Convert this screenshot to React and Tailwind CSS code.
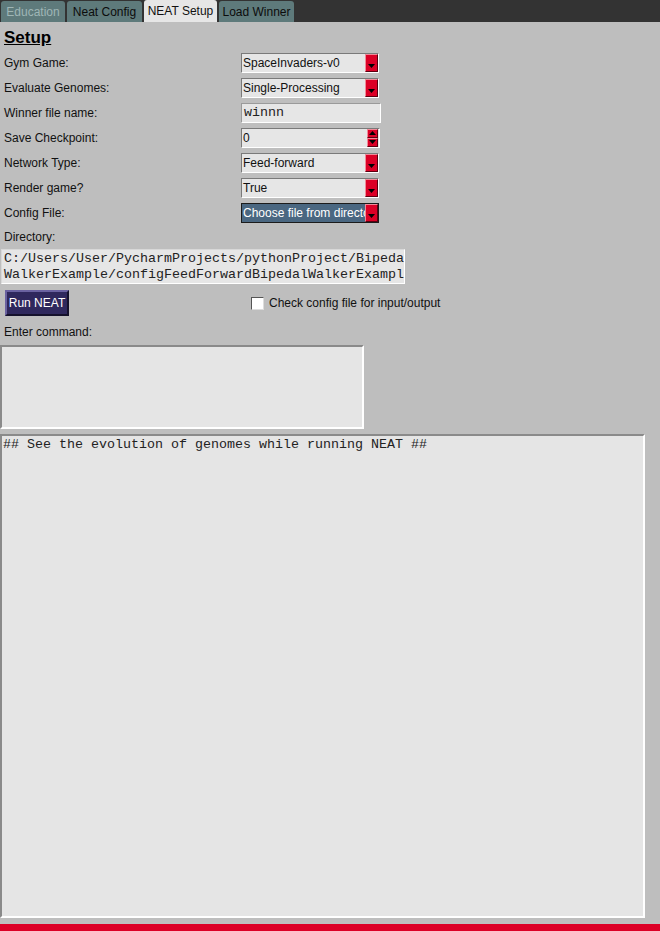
import React from 'react';

const ui = { fontFamily: '"Liberation Sans", Arial, sans-serif' };
const mono = { fontFamily: '"Liberation Mono", "Courier New", monospace' };

// small black triangle used on the red buttons
const Tri = ({ up }) => (
  <svg width="7" height="4" viewBox="0 0 7 4" className="block">
    <path d={up ? 'M0 4 L3.5 0 L7 4 Z' : 'M0 0 L7 0 L3.5 4 Z'} fill="#000" />
  </svg>
);

const RedButton = ({ children, className }) => (
  <div
    className={`flex justify-center bg-[#dc0026] border border-t-[#f08a98] border-l-[#f08a98] border-b-[#5a0010] border-r-[#5a0010] ${className}`}
  >
    {children}
  </div>
);

const Combo = ({ value, selected }) => (
  <div
    className={
      selected
        ? 'flex h-[20px] w-[138px] border border-[#1b1b1b] bg-[#4a6781]'
        : 'flex h-[20px] w-[138px] border border-t-[#7a7a7a] border-l-[#7a7a7a] border-b-white border-r-white bg-[#e6e6e6]'
    }
  >
    <span
      className={`flex-1 overflow-hidden whitespace-nowrap pl-[1px] text-[12px] leading-[18px] ${selected ? 'text-white' : 'text-[#111]'}`}
    >
      {value}
    </span>
    <RedButton className="w-[13px] items-end pb-[3px]">
      <Tri />
    </RedButton>
  </div>
);

const Spin = ({ value }) => (
  <div className="flex h-[20px] w-[139px] border border-t-[#7a7a7a] border-l-[#7a7a7a] border-b-white border-r-white bg-[#e6e6e6]">
    <span className="flex-1 pl-[1px] text-[12px] leading-[18px] text-[#111]">{value}</span>
    <div className="flex w-[11px] flex-col mr-[1px]">
      <RedButton className="h-[9px] items-center">
        <Tri up />
      </RedButton>
      <RedButton className="h-[9px] items-center">
        <Tri />
      </RedButton>
    </div>
  </div>
);

const Entry = ({ value }) => (
  <div className="h-[20px] w-[140px] border border-t-[#9a9a9a] border-l-[#9a9a9a] border-b-white border-r-white bg-[#e6e6e6] pl-[2px] text-[13.33px] leading-[18px] text-[#222]" style={mono}>
    {value}
  </div>
);

const Row = ({ label, children }) => (
  <div className="flex h-[25px] items-center pl-[4px]">
    <span className="w-[237px] text-[12px] text-[#111]">{label}</span>
    {children}
  </div>
);

const tabs = [
  { name: 'Education', w: 'w-[64px]', muted: true },
  { name: 'Neat Config', w: 'w-[75px]' },
  { name: 'NEAT Setup', w: 'w-[73px]', active: true },
  { name: 'Load Winner', w: 'w-[75px]' },
];

export default function App() {
  return (
    <div className="flex h-[931px] w-[660px] flex-col overflow-hidden bg-[#bebebe]" style={ui}>
      {/* tab strip */}
      <div className="flex h-[22px] items-end gap-[2px] bg-[#333333] pl-[1px]">
        {tabs.map((t) => (
          <div
            key={t.name}
            className={`flex h-[21px] ${t.w} items-center justify-center rounded-t-[3px] text-[12px] ${
              t.active
                ? 'h-[22px] bg-[#e6e6e6] text-[#111]'
                : t.muted
                ? 'bg-[#5e7a7b] text-[#9fb6b6]'
                : 'bg-[#5e7a7b] text-[#0c0c0c]'
            }`}
          >
            {t.name}
          </div>
        ))}
      </div>

      <div className="pl-[4px] pt-[4px] h-[28px]">
        <span className="text-[17px] font-bold underline leading-[22px] text-black">Setup</span>
      </div>

      <Row label="Gym Game:">
        <Combo value="SpaceInvaders-v0" />
      </Row>
      <Row label="Evaluate Genomes:">
        <Combo value="Single-Processing" />
      </Row>
      <Row label="Winner file name:">
        <Entry value="winnn" />
      </Row>
      <Row label="Save Checkpoint:">
        <Spin value="0" />
      </Row>
      <Row label="Network Type:">
        <Combo value="Feed-forward" />
      </Row>
      <Row label="Render game?">
        <Combo value="True" />
      </Row>
      <Row label="Config File:">
        <Combo value="Choose file from directory" selected />
      </Row>
      <div className="flex h-[24px] items-center pl-[4px] text-[12px] text-[#111]">Directory:</div>

      <div
        className="ml-[1px] h-[35px] w-[404px] border border-t-[#d8d8d8] border-l-[#d8d8d8] border-b-white border-r-white bg-[#e6e6e6] pl-[2px] pt-[1px] text-[13.33px] leading-[16px] text-[#222] overflow-hidden whitespace-nowrap"
        style={mono}
      >
        <div>C:/Users/User/PycharmProjects/pythonProject/Bipeda</div>
        <div>WalkerExample/configFeedForwardBipedalWalkerExampl</div>
      </div>

      <div className="flex items-center pt-[6px]">
        <button className="ml-[5px] h-[26px] w-[64px] border-2 border-t-[#6a62a0] border-l-[#6a62a0] border-b-[#15112c] border-r-[#15112c] bg-[#2f285d] text-[12px] text-white">
          Run NEAT
        </button>
        <div className="ml-[182px] flex items-center gap-[5px]">
          <span className="block h-[13px] w-[13px] border border-t-[#555] border-l-[#555] border-b-[#ddd] border-r-[#ddd] bg-white" />
          <span className="text-[12px] text-[#111]">Check config file for input/output</span>
        </div>
      </div>

      <div className="flex h-[29px] items-center pl-[4px] pt-[2px] text-[12px] text-[#111]">Enter command:</div>

      <div className="h-[84px] w-[364px] border-2 border-t-[#8a8a8a] border-l-[#8a8a8a] border-b-white border-r-white bg-[#e5e5e5]" />

      <div
        className="mt-[5px] h-[484px] w-[645px] border-2 border-t-[#8a8a8a] border-l-[#8a8a8a] border-b-white border-r-white bg-[#e5e5e5] pl-[1px] pt-[1px] text-[13.33px] leading-[16px] text-[#222]"
        style={mono}
      >
        ## See the evolution of genomes while running NEAT ##
      </div>

      <div className="mt-auto h-[7px] bg-[#dc0026]" />
    </div>
  );
}
